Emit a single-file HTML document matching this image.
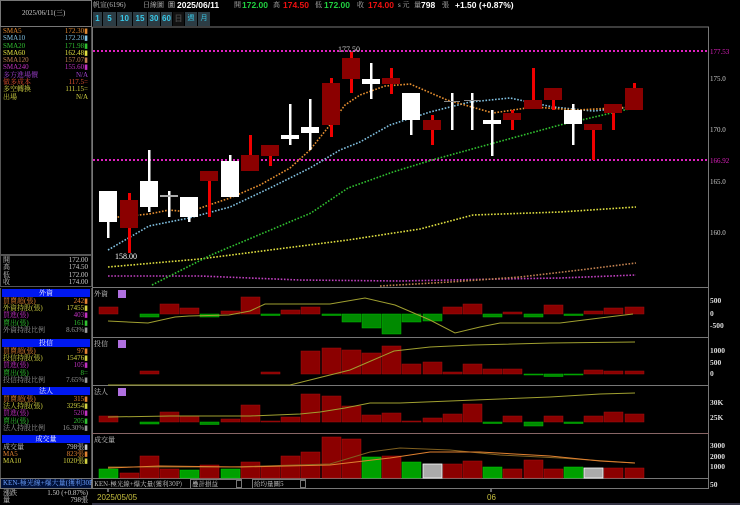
<!DOCTYPE html>
<html><head><meta charset="utf-8"><style>
*{margin:0;padding:0;box-sizing:border-box}
body{width:740px;height:505px;background:#000;overflow:hidden;position:relative;font-family:"Liberation Sans","Noto Sans CJK TC",sans-serif;color:#ccc}
.a{position:absolute;white-space:nowrap;line-height:1}
.t{font-size:7px;font-family:"Liberation Serif","Noto Serif CJK SC",serif}
.r{text-align:right}
.v{font-size:8.5px;font-weight:bold;top:1px}
.hd{position:absolute;left:2px;width:88px;height:8px;background:#0018f0;color:#fff;font-size:7px;text-align:center;line-height:8px;font-family:"Noto Serif CJK SC",serif}
.btn{position:absolute;top:12px;height:14px;background:#2c3c44;color:#38c8e8;font-size:8px;text-align:center;line-height:14px;font-weight:bold}
</style></head><body>
<div style="position:absolute;left:0;top:0;width:92px;height:27px;border:1px solid #777"></div>
<div class="a t" style="left:22px;top:10px;color:#ccc">2025/06/11(三)</div>
<div style="position:absolute;left:0;top:27px;width:92px;height:228px;border:1px solid #555;border-top:none"></div>
<div class="a t" style="left:3px;top:28px;color:#e08830">SMA5</div><div class="a t r" style="right:652px;top:28px;color:#e08830">172.30▮</div>
<div class="a t" style="left:3px;top:35px;color:#80c0e0">SMA10</div><div class="a t r" style="right:652px;top:35px;color:#80c0e0">172.20▮</div>
<div class="a t" style="left:3px;top:43px;color:#30c030">SMA20</div><div class="a t r" style="right:652px;top:43px;color:#30c030">171.98▮</div>
<div class="a t" style="left:3px;top:50px;color:#e0e040">SMA60</div><div class="a t r" style="right:652px;top:50px;color:#e0e040">162.48▮</div>
<div class="a t" style="left:3px;top:57px;color:#c08050">SMA120</div><div class="a t r" style="right:652px;top:57px;color:#c08050">157.07▮</div>
<div class="a t" style="left:3px;top:64px;color:#c030c0">SMA240</div><div class="a t r" style="right:652px;top:64px;color:#c030c0">155.60▮</div>
<div class="a t" style="left:3px;top:72px;color:#a040d0">多方進場價</div><div class="a t r" style="right:652px;top:72px;color:#a040d0">N/A</div>
<div class="a t" style="left:3px;top:79px;color:#e05030">做多成本</div><div class="a t r" style="right:652px;top:79px;color:#e05030">117.5=</div>
<div class="a t" style="left:3px;top:86px;color:#d0d040">多空轉換</div><div class="a t r" style="right:652px;top:86px;color:#d0d040">111.15=</div>
<div class="a t" style="left:3px;top:94px;color:#d0d040">出場</div><div class="a t r" style="right:652px;top:94px;color:#d0d040">N/A</div>

<div style="position:absolute;left:0;top:255px;width:92px;height:32px;border:1px solid #555"></div>
<div class="a t" style="left:3px;top:257px">開</div><div class="a t r" style="right:652px;top:257px">172.00</div>
<div class="a t" style="left:3px;top:264px">高</div><div class="a t r" style="right:652px;top:264px">174.50</div>
<div class="a t" style="left:3px;top:272px">低</div><div class="a t r" style="right:652px;top:272px">172.00</div>
<div class="a t" style="left:3px;top:279px">收</div><div class="a t r" style="right:652px;top:279px">174.00</div>

<div class="hd" style="top:289px">外資</div>
<div class="a t" style="left:3px;top:298px;color:#e08030">買賣超(張)</div><div class="a t r" style="right:652px;top:298px;color:#e08030">242▮</div>
<div class="a t" style="left:3px;top:305px;color:#d0d040">外資持股(張)</div><div class="a t r" style="right:652px;top:305px;color:#d0d040">17455▮</div>
<div class="a t" style="left:3px;top:312px;color:#c030c0">買進(張)</div><div class="a t r" style="right:652px;top:312px;color:#c030c0">403▮</div>
<div class="a t" style="left:3px;top:320px;color:#30c030">賣出(張)</div><div class="a t r" style="right:652px;top:320px;color:#30c030">161▮</div>
<div class="a t" style="left:3px;top:327px;color:#999">外資持股比例</div><div class="a t r" style="right:652px;top:327px;color:#999">8.63%▮</div>

<div class="hd" style="top:339px">投信</div>
<div class="a t" style="left:3px;top:348px;color:#e08030">買賣超(張)</div><div class="a t r" style="right:652px;top:348px;color:#e08030">97▮</div>
<div class="a t" style="left:3px;top:355px;color:#d0d040">投信持股(張)</div><div class="a t r" style="right:652px;top:355px;color:#d0d040">15476▮</div>
<div class="a t" style="left:3px;top:362px;color:#c030c0">買進(張)</div><div class="a t r" style="right:652px;top:362px;color:#c030c0">105▮</div>
<div class="a t" style="left:3px;top:370px;color:#30c030">賣出(張)</div><div class="a t r" style="right:652px;top:370px;color:#30c030">8=</div>
<div class="a t" style="left:3px;top:377px;color:#999">投信持股比例</div><div class="a t r" style="right:652px;top:377px;color:#999">7.65%▮</div>

<div class="hd" style="top:387px">法人</div>
<div class="a t" style="left:3px;top:396px;color:#e08030">買賣超(張)</div><div class="a t r" style="right:652px;top:396px;color:#e08030">315▮</div>
<div class="a t" style="left:3px;top:403px;color:#d0d040">法人持股(張)</div><div class="a t r" style="right:652px;top:403px;color:#d0d040">32954▮</div>
<div class="a t" style="left:3px;top:410px;color:#c030c0">買進(張)</div><div class="a t r" style="right:652px;top:410px;color:#c030c0">520▮</div>
<div class="a t" style="left:3px;top:418px;color:#30c030">賣出(張)</div><div class="a t r" style="right:652px;top:418px;color:#30c030">205▮</div>
<div class="a t" style="left:3px;top:425px;color:#999">法人持股比例</div><div class="a t r" style="right:652px;top:425px;color:#999">16.30%▮</div>

<div class="hd" style="top:435px">成交量</div>
<div class="a t" style="left:3px;top:444px;color:#ccc">成交量</div><div class="a t r" style="right:652px;top:444px;color:#ccc">798張▮</div>
<div class="a t" style="left:3px;top:451px;color:#e08030">MA5</div><div class="a t r" style="right:652px;top:451px;color:#e08030">823張▮</div>
<div class="a t" style="left:3px;top:458px;color:#d0d040">MA10</div><div class="a t r" style="right:652px;top:458px;color:#d0d040">1020張▮</div>
<div style="position:absolute;left:0;top:288px;width:92px;height:190px;border-left:1px solid #555;border-right:1px solid #555"></div>
<div style="position:absolute;left:0;top:478px;width:92px;height:11px;border:1px solid #777;background:#001038"></div>
<div class="a t" style="left:3px;top:480px;color:#6aa0ff">KEN-極光線+爆大量(獲利30P)</div>
<div class="a t" style="left:3px;top:490px">漲跌</div><div class="a t r" style="right:652px;top:490px">1.50 (+0.87%)</div>
<div class="a t" style="left:3px;top:497px">量</div><div class="a t r" style="right:652px;top:497px">798張</div>

<div class="a t" style="left:93px;top:2px;color:#bbb">帆宣(6196)</div>
<div class="a t" style="left:143px;top:2px;color:#bbb">日線圖</div>
<div class="a" style="left:168px;top:2px;font-size:7px;color:#bbb">圖</div>
<div class="a v" style="left:177px;color:#fff">2025/06/11</div>
<div class="a t" style="left:234px;top:2px;color:#bbb">開</div>
<div class="a v" style="left:242px;color:#20d040">172.00</div>
<div class="a t" style="left:273px;top:2px;color:#bbb">高</div>
<div class="a v" style="left:283px;color:#ee1010">174.50</div>
<div class="a t" style="left:315px;top:2px;color:#bbb">低</div>
<div class="a v" style="left:324px;color:#20d040">172.00</div>
<div class="a t" style="left:357px;top:2px;color:#bbb">收</div>
<div class="a v" style="left:368px;color:#ee1010">174.00</div>
<div class="a t" style="left:398px;top:2px;color:#bbb">s 元</div>
<div class="a t" style="left:414px;top:2px;color:#bbb">量</div>
<div class="a v" style="left:421px;color:#fff">798</div>
<div class="a t" style="left:442px;top:2px;color:#bbb">張</div>
<div class="a v" style="left:455px;color:#fff">+1.50 (+0.87%)</div>

<div class="btn" style="left:93px;width:9px">1</div>
<div class="btn" style="left:103px;width:13px">5</div>
<div class="btn" style="left:117px;width:15px">10</div>
<div class="btn" style="left:133px;width:14px">15</div>
<div class="btn" style="left:148px;width:12px">30</div>
<div class="btn" style="left:161px;width:11px">60</div>
<div class="btn" style="left:173px;width:11px;background:#111;color:#444">日</div>
<div class="btn" style="left:185px;width:12px;font-size:7px;font-weight:normal">週</div>
<div class="btn" style="left:198px;width:12px;font-size:7px;font-weight:normal">月</div>

<svg style="position:absolute;left:0;top:0" width="740" height="505" font-family="Liberation Sans, Noto Sans CJK TC, sans-serif">
<g fill="none" stroke="#777" stroke-width="1">
<polyline points="92.5,27 708.5,27 708.5,489"/>
<line x1="92.5" y1="27" x2="92.5" y2="489"/>
<line x1="92" y1="287.5" x2="709" y2="287.5"/>
<line x1="92" y1="337.5" x2="709" y2="337.5"/>
<line x1="92" y1="385.5" x2="709" y2="385.5"/>
<line x1="92" y1="433.5" x2="709" y2="433.5" stroke="#866"/>
<line x1="92" y1="478.5" x2="709" y2="478.5"/>
<line x1="92" y1="488.5" x2="709" y2="488.5"/>
</g>
<g stroke="#e020c0" stroke-width="2" stroke-dasharray="2,2">
<line x1="93" y1="51" x2="708" y2="51"/>
<line x1="93" y1="160" x2="708" y2="160"/>
</g>
<g font-size="7" fill="#ccc" font-family="Liberation Serif,serif">
<text x="710" y="54" fill="#e020c0">177.53</text>
<text x="710" y="81">175.0</text>
<text x="710" y="132">170.0</text>
<text x="710" y="163" fill="#e020c0">166.92</text>
<text x="710" y="184">165.0</text>
<text x="710" y="235">160.0</text>
<text x="338" y="52" font-size="8">177.50</text>
<text x="115" y="259" font-size="8" fill="#fff">158.00</text>
</g>
<g fill="none" stroke-width="1.6" stroke-dasharray="1.6,1.6">
<polyline stroke="#c040c0" points="108,276 200,276 300,280 400,281 500,279 560,278 636,275"/>
<polyline stroke="#c08050" points="380,286 450,282 520,277 580,270 636,263"/>
<polyline stroke="#e0e040" points="108,267 200,259 270,250 348,240 420,229 473,215 560,212 636,207"/>
<polyline stroke="#30c030" points="152,285 211,255 311,213 348,188 393,172 432,160 494,143 560,125 633,108"/>
<polyline stroke="#80c0e0" points="108,250 149,226 189,218 230,207 270,188 310,168 340,150 360,142 390,125 430,112 470,102 510,98 553,107 593,111 633,107"/>
<polyline stroke="#e89030" points="108,218 149,214 169,210 189,212 209,205 230,198 260,185 290,168 310,150 330,125 345,105 360,95 385,86 410,84 447,100 493,113 533,107 577,110 633,107"/>
</g>
<g fill="#fff" stroke="none">
<rect x="107" y="191" width="2.5" height="47"/><rect x="99" y="191" width="18" height="31"/>
<rect x="148" y="150" width="2.5" height="62"/><rect x="140" y="181" width="18" height="26"/>
<rect x="168" y="191" width="2.5" height="26"/><rect x="160" y="195" width="18" height="2" fill="#aaa"/>
<rect x="188" y="197" width="2.5" height="25"/><rect x="180" y="197" width="18" height="20"/>
<rect x="229" y="155" width="2.5" height="42"/><rect x="221" y="161" width="18" height="36"/>
<rect x="289" y="104" width="2.5" height="41"/><rect x="281" y="135" width="18" height="4"/>
<rect x="309" y="99" width="2.5" height="51"/><rect x="301" y="127" width="18" height="6"/>
<rect x="370" y="63" width="2.5" height="36"/><rect x="362" y="79" width="18" height="5"/>
<rect x="410" y="93" width="2.5" height="42"/><rect x="402" y="93" width="18" height="27"/>
<rect x="451" y="93" width="2.5" height="37"/><rect x="444" y="101" width="16" height="1" fill="#888"/>
<rect x="471" y="93" width="2.5" height="37"/><rect x="464" y="100" width="16" height="1" fill="#888"/>
<rect x="491" y="110" width="2.5" height="46"/><rect x="483" y="120" width="18" height="4"/>
<rect x="572" y="104" width="2.5" height="41"/><rect x="564" y="110" width="18" height="14"/>
</g>
<g fill="#f00000">
<rect x="128" y="193" width="3" height="60"/><rect x="208" y="171" width="3" height="46"/>
<rect x="249" y="135" width="3" height="36"/><rect x="269" y="145" width="3" height="21"/>
<rect x="330" y="78" width="3" height="59"/><rect x="350" y="52" width="3" height="41"/>
<rect x="390" y="68" width="3" height="26"/><rect x="431" y="115" width="3" height="30"/>
<rect x="511" y="110" width="3" height="20"/><rect x="532" y="68" width="3" height="41"/>
<rect x="552" y="88" width="3" height="22"/><rect x="592" y="124" width="3" height="36"/>
<rect x="612" y="104" width="3" height="26"/><rect x="633" y="83" width="3" height="27"/>
</g>
<g fill="#8b0000">
<rect x="120" y="200" width="18" height="28"/><rect x="200" y="171" width="18" height="10"/>
<rect x="241" y="155" width="18" height="16"/><rect x="261" y="145" width="18" height="11"/>
<rect x="322" y="83" width="18" height="42"/><rect x="342" y="58" width="18" height="21"/>
<rect x="382" y="78" width="18" height="6"/><rect x="423" y="120" width="18" height="10"/>
<rect x="503" y="113" width="18" height="7"/><rect x="524" y="100" width="18" height="9"/>
<rect x="544" y="88" width="18" height="12"/><rect x="584" y="124" width="18" height="6"/>
<rect x="604" y="104" width="18" height="9"/><rect x="625" y="88" width="18" height="22"/>
</g>

<g font-size="7" fill="#ccc" font-family="Noto Serif CJK SC,serif">
<text x="94" y="296">外資</text><text x="94" y="346">投信</text><text x="94" y="394">法人</text><text x="94" y="442">成交量</text>
</g>
<g fill="#b070e0"><rect x="118" y="290" width="8" height="8"/><rect x="118" y="340" width="8" height="8"/><rect x="118" y="388" width="8" height="8"/></g>
<g font-size="7.5" fill="#ddd" font-family="Liberation Serif,serif" font-weight="bold">
<text x="710" y="303">500</text><text x="710" y="316">0</text><text x="710" y="328">-500</text>
<text x="710" y="353">1000</text><text x="710" y="365">500</text><text x="710" y="376">0</text>
<text x="710" y="405">30K</text><text x="710" y="420">25K</text>
<text x="710" y="448">3000</text><text x="710" y="459">2000</text><text x="710" y="469">1000</text>
<text x="710" y="487">50</text>
</g>

<g fill="#8b0000" stroke="#a01010" stroke-width="0.5">
<rect x="99" y="307" width="19" height="7"/><rect x="160" y="304" width="19" height="10"/><rect x="180" y="308" width="19" height="6"/>
<rect x="221" y="311" width="19" height="3"/><rect x="241" y="297" width="19" height="17"/><rect x="281" y="310" width="19" height="4"/>
<rect x="301" y="307" width="19" height="7"/><rect x="443" y="307" width="19" height="7"/><rect x="463" y="304" width="19" height="10"/>
<rect x="503" y="312" width="19" height="2"/><rect x="544" y="305" width="19" height="9"/><rect x="584" y="311" width="19" height="3"/>
<rect x="604" y="308" width="19" height="6"/><rect x="625" y="307" width="19" height="7"/>
</g>
<g fill="#008a00" stroke="#00c000" stroke-width="0.5">
<rect x="140" y="314" width="19" height="3"/><rect x="200" y="314" width="19" height="3"/><rect x="261" y="314" width="19" height="1.5"/>
<rect x="322" y="314" width="19" height="1.5"/><rect x="342" y="314" width="19" height="8"/><rect x="362" y="314" width="19" height="14"/>
<rect x="382" y="314" width="19" height="20"/><rect x="402" y="314" width="19" height="8"/><rect x="423" y="314" width="19" height="7"/>
<rect x="483" y="314" width="19" height="3"/><rect x="524" y="314" width="19" height="3"/><rect x="564" y="314" width="19" height="1.5"/>
</g>
<polyline fill="none" stroke="#a0a030" stroke-width="1" points="108,321 148,323 175,317 189,316 229,315 250,311 265,304 330,304 365,298 395,305 430,320 455,333 480,327 500,323 560,323 600,318 633,314"/>

<g fill="#8b0000" stroke="#a01010" stroke-width="0.5">
<rect x="140" y="371" width="19" height="3"/><rect x="261" y="372" width="19" height="2"/>
<rect x="301" y="351" width="19" height="23"/><rect x="322" y="348" width="19" height="26"/><rect x="342" y="350" width="19" height="24"/>
<rect x="362" y="353" width="19" height="21"/><rect x="382" y="346" width="19" height="28"/><rect x="402" y="364" width="19" height="10"/>
<rect x="423" y="362" width="19" height="12"/><rect x="443" y="372" width="19" height="2"/><rect x="463" y="364" width="19" height="10"/>
<rect x="483" y="369" width="19" height="5"/><rect x="503" y="369" width="19" height="5"/>
<rect x="584" y="370" width="19" height="4"/><rect x="604" y="371" width="19" height="3"/><rect x="625" y="371" width="19" height="3"/>
</g>
<g fill="#008a00" stroke="#00c000" stroke-width="0.5">
<rect x="524" y="374" width="19" height="1"/><rect x="544" y="374" width="19" height="2.5"/><rect x="564" y="374" width="19" height="1"/>
</g>
<polyline fill="none" stroke="#a0a030" stroke-width="1" points="108,385 290,385 310,380 350,370 394,351 430,347 473,345 550,343 635,342"/>

<g fill="#8b0000" stroke="#a01010" stroke-width="0.5">
<rect x="99" y="416" width="19" height="6"/><rect x="160" y="412" width="19" height="10"/><rect x="180" y="416" width="19" height="6"/>
<rect x="221" y="419" width="19" height="3"/><rect x="241" y="405" width="19" height="17"/><rect x="261" y="421" width="19" height="1"/>
<rect x="281" y="417" width="19" height="5"/><rect x="301" y="394" width="19" height="28"/><rect x="322" y="396" width="19" height="26"/>
<rect x="342" y="406" width="19" height="16"/><rect x="362" y="415" width="19" height="7"/><rect x="382" y="413" width="19" height="9"/>
<rect x="402" y="421" width="19" height="1"/><rect x="423" y="418" width="19" height="4"/><rect x="443" y="414" width="19" height="8"/>
<rect x="463" y="404" width="19" height="18"/><rect x="503" y="416" width="19" height="6"/><rect x="544" y="416" width="19" height="6"/>
<rect x="584" y="416" width="19" height="6"/><rect x="604" y="412" width="19" height="10"/><rect x="625" y="414" width="19" height="8"/>
</g>
<g fill="#008a00" stroke="#00c000" stroke-width="0.5">
<rect x="140" y="422" width="19" height="2"/><rect x="200" y="422" width="19" height="2.5"/><rect x="483" y="422" width="19" height="1.5"/>
<rect x="524" y="422" width="19" height="4"/><rect x="564" y="422" width="19" height="1.5"/>
</g>
<polyline fill="none" stroke="#a0a030" stroke-width="1" points="108,417 170,416 250,416 300,414 320,412 345,408 370,403 400,403 450,401 500,399 550,397 600,394 635,393"/>

<g fill="#8b0000" stroke="#b01010" stroke-width="0.5">
<rect x="120" y="473" width="19" height="5"/><rect x="140" y="456" width="19" height="22"/><rect x="160" y="469" width="19" height="9"/>
<rect x="200" y="465" width="19" height="13"/><rect x="241" y="462" width="19" height="16"/><rect x="261" y="466" width="19" height="12"/>
<rect x="281" y="456" width="19" height="22"/><rect x="301" y="452" width="19" height="26"/><rect x="322" y="437" width="19" height="41"/>
<rect x="342" y="439" width="19" height="39"/><rect x="382" y="456" width="19" height="22"/><rect x="443" y="464" width="19" height="14"/>
<rect x="463" y="461" width="19" height="17"/><rect x="503" y="469" width="19" height="9"/><rect x="524" y="460" width="19" height="18"/>
<rect x="544" y="469" width="19" height="9"/><rect x="604" y="468" width="19" height="10"/><rect x="625" y="468" width="19" height="10"/>
</g>
<g fill="#00a000" stroke="#00d000" stroke-width="0.5">
<rect x="99" y="469" width="19" height="9"/><rect x="180" y="470" width="19" height="8"/><rect x="221" y="469" width="19" height="9"/>
<rect x="362" y="457" width="19" height="21"/><rect x="402" y="462" width="19" height="16"/><rect x="483" y="467" width="19" height="11"/>
<rect x="564" y="467" width="19" height="11"/>
</g>
<g fill="#aaa" stroke="#fff" stroke-width="0.8">
<rect x="423" y="464" width="19" height="14"/><rect x="584" y="468" width="19" height="10"/>
</g>
<polyline fill="none" stroke="#806020" stroke-width="1" points="108,467 230,467 330,464 370,452 400,448 450,450 500,455 560,458 635,463"/>
<polyline fill="none" stroke="#e08030" stroke-width="1" points="108,468 160,466 240,467 330,465 390,458 430,452 480,452 550,456 600,461 635,463"/>

<rect x="93" y="479" width="615" height="9" fill="#000"/>
<g font-size="6.5" fill="#ccc" font-family="Noto Serif CJK SC,serif">
<text x="94" y="486">KEN-極光線+爆大量(獲利30P)</text>
</g>
<rect x="190.5" y="479.5" width="51" height="9" fill="#000" stroke="#777"/>
<rect x="236.5" y="480.5" width="5" height="7" fill="#000" stroke="#777"/>
<rect x="252.5" y="479.5" width="53" height="9" fill="#000" stroke="#777"/>
<rect x="300.5" y="480.5" width="5" height="7" fill="#000" stroke="#777"/>
<g font-size="6.5" fill="#ccc" font-family="Noto Serif CJK SC,serif">
<text x="192" y="486">疊計損益</text><text x="254" y="486">給均量圖5</text>
</g>
<g stroke="#ccc"><line x1="108" y1="489" x2="108" y2="492"/><line x1="491" y1="489" x2="491" y2="492"/></g>
<text x="97" y="500" font-size="8" fill="#c8c040">2025/05/05</text>
<text x="487" y="500" font-size="8" fill="#c8c040">06</text>
<line x1="92" y1="504" x2="740" y2="504" stroke="#334" stroke-width="2"/>
</svg>
</body></html>
